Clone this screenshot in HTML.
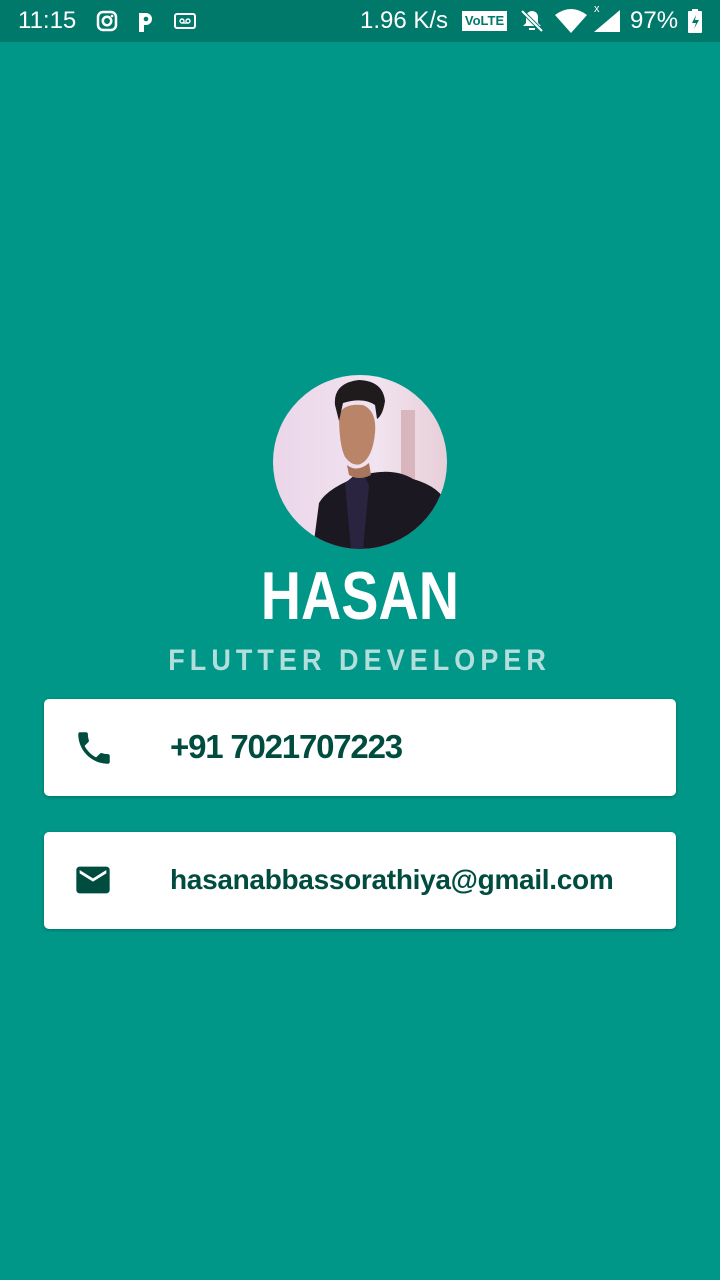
<!DOCTYPE html>
<html><head><meta charset="utf-8"><style>
html,body{margin:0;padding:0;width:720px;height:1280px;overflow:hidden;background:#009688;font-family:"Liberation Sans",sans-serif;}
.sb{position:absolute;left:0;top:0;width:720px;height:42px;background:#00796b;color:#fff;}
.sb span{position:absolute;top:7px;font-size:24px;}
.abs{position:absolute;}
.card{position:absolute;left:44px;width:632px;height:97px;background:#fff;border-radius:5px;box-shadow:0 1px 3px rgba(0,0,0,.25);}
.txt{position:absolute;left:126px;color:#004d40;font-weight:bold;white-space:nowrap;}
</style></head><body>
<div class="sb">
<span style="left:18px">11:15</span>
<svg class="abs" style="left:96px;top:10px" width="22" height="22" viewBox="0 0 22 22"><rect x="2" y="2" width="18" height="18" rx="5" fill="none" stroke="#fff" stroke-width="2.5"/><circle cx="11" cy="11" r="4.2" fill="none" stroke="#fff" stroke-width="2.5"/><circle cx="16" cy="6" r="1.3" fill="#fff"/></svg>
<svg class="abs" style="left:136px;top:10px" width="20" height="22" viewBox="0 0 20 22"><path d="M3 22V3h7a6 6 0 010 12H8v7z" fill="#fff"/><circle cx="10" cy="9" r="2.3" fill="#00796b"/></svg>
<svg class="abs" style="left:174px;top:12px" width="22" height="18" viewBox="0 0 22 18"><rect x="1" y="2" width="20" height="14" rx="2" fill="none" stroke="#fff" stroke-width="2"/><circle cx="8" cy="9" r="2" fill="none" stroke="#fff" stroke-width="1.4"/><circle cx="14" cy="9" r="2" fill="none" stroke="#fff" stroke-width="1.4"/><path d="M8 11h6" stroke="#fff" stroke-width="1.4"/></svg>
<span style="left:360px">1.96 K/s</span>
<div class="abs" style="left:462px;top:11px;width:45px;height:20px;background:#fff;color:#00796b;font-size:13px;font-weight:bold;text-align:center;line-height:20px;">VoLTE</div>
<svg class="abs" style="left:520px;top:8px" width="24" height="26" viewBox="0 0 24 26"><path d="M12 3a6 6 0 016 6v6l3 3H3l3-3V9a6 6 0 016-6z" fill="#fff"/><path d="M9 21h6" stroke="#fff" stroke-width="2"/><path d="M2 3l20 20" stroke="#00796b" stroke-width="4"/><path d="M2 3l20 20" stroke="#fff" stroke-width="2"/></svg>
<svg class="abs" style="left:554px;top:9px" width="34" height="24" viewBox="0 0 34 24"><path d="M1 6Q17-6 33 6L17 24z" fill="#fff"/></svg>
<span style="left:594px;top:3px;font-size:11px">x</span>
<svg class="abs" style="left:594px;top:10px" width="26" height="22" viewBox="0 0 26 22"><path d="M26 0V22H0z" fill="#fff"/></svg>
<span style="left:630px">97%</span>
<svg class="abs" style="left:688px;top:9px" width="14" height="24" viewBox="0 0 14 24"><rect x="4" y="0" width="6" height="3" fill="#fff"/><rect x="0" y="2" width="14" height="22" rx="1" fill="#fff"/><path d="M8 6l-4 8h4l-2 6 5-9H7z" fill="#00796b"/></svg>
</div>

<svg class="abs" style="left:273px;top:375px" width="174" height="174" viewBox="0 0 174 174">
<defs><clipPath id="c"><circle cx="87" cy="87" r="87"/></clipPath>
<linearGradient id="bg" x1="0" y1="0" x2="1" y2="0"><stop offset="0" stop-color="#ebd6ea"/><stop offset=".6" stop-color="#f1e3ef"/><stop offset="1" stop-color="#e8cfd8"/></linearGradient></defs>
<g clip-path="url(#c)">
<rect width="174" height="174" fill="url(#bg)"/>
<rect x="128" y="35" width="14" height="70" fill="#d9b6bd"/>
<path d="M40 174L46 128Q55 112 90 100Q120 92 140 104Q168 112 174 130V174z" fill="#1c1822"/>
<path d="M72 108L88 95L96 110L90 174H78z" fill="#2a2440"/>
<path d="M66 40Q66 70 72 82Q82 95 92 86Q100 78 102 58Q104 36 90 30Q70 28 66 40z" fill="#b98468"/>
<path d="M74 90Q84 98 96 88L98 100Q86 106 76 100z" fill="#a9755c"/>
<path d="M62 30Q60 8 86 5Q110 6 112 26Q110 40 104 44L102 30Q90 22 70 28L66 46z" fill="#1f1a1c"/>
</g></svg>

<div class="abs" style="left:0;top:557px;width:720px;text-align:center;color:#fff;font-size:68px;font-weight:bold;line-height:78px;"><span style="display:inline-block;transform:scaleX(0.82)">HASAN</span></div>
<div class="abs" style="left:0;top:641px;width:720px;text-align:center;color:#b2dfdb;font-size:30px;font-weight:bold;letter-spacing:5.6px;line-height:40px;"><span style="display:inline-block;transform:scaleX(0.9)">FLUTTER DEVELOPER</span></div>

<div class="card" style="top:699px">
<svg class="abs" style="left:29px;top:28px" width="42" height="42" viewBox="0 0 24 24"><path fill="#004d40" d="M6.62 10.79c1.44 2.83 3.76 5.14 6.59 6.59l2.2-2.2c.27-.27.67-.36 1.02-.24 1.12.37 2.330.57 3.57.57.55 0 1 .45 1 1V20c0 .55-.45 1-1 1-9.39 0-17-7.61-17-17 0-.55.45-1 1-1h3.5c.55 0 1 .45 1 1 0 1.25.2 2.45.57 3.57.11.35.03.74-.25 1.02l-2.2 2.2z"/></svg>
<div class="txt" style="top:29px;font-size:33px;letter-spacing:-1.2px">+91 7021707223</div>
</div>
<div class="card" style="top:832px">
<svg class="abs" style="left:29px;top:28px" width="40" height="40" viewBox="0 0 24 24"><path fill="#004d40" d="M20 4H4c-1.1 0-2 .9-2 2v12c0 1.1.9 2 2 2h16c1.1 0 2-.9 2-2V6c0-1.1-.9-2-2-2zm0 4l-8 5-8-5V6l8 5 8-5v2z"/></svg>
<div class="txt" style="top:32px;font-size:28px;letter-spacing:-0.3px">hasanabbassorathiya@gmail.com</div>
</div>
</body></html>
